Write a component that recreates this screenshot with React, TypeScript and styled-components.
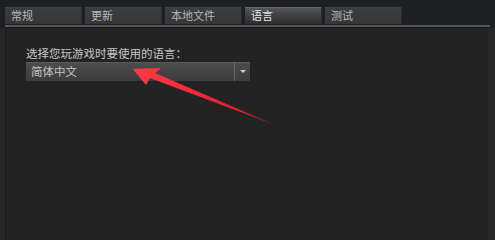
import styled, { createGlobalStyle } from 'styled-components';

const GlobalStyle = createGlobalStyle`
  html, body {
    margin: 0;
    padding: 0;
    background: #232323;
  }
  body {
    font-family: "Noto Sans CJK SC", "Noto Sans", sans-serif;
  }
`;

const Window = styled.div`
  position: relative;
  width: 495px;
  min-height: 201px;
  height: 100vh;
  overflow: hidden;
  background: #1d1f22;
  display: flex;
  flex-direction: column;
`;

const TabBar = styled.div`
  display: flex;
  gap: 3px;
  padding: 7px 0 0 5px;
  height: 17px;
`;

const Tab = styled.div<{ $active?: boolean }>`
  width: 77px;
  height: 17px;
  box-sizing: border-box;
  padding-left: 6px;
  font-size: 11px;
  line-height: 17px;
  color: ${(p) => (p.$active ? '#e6e6e6' : '#b8b8b8')};
  background: ${(p) =>
    p.$active
      ? 'linear-gradient(#585858, #3c3c3c 60%, #2e2e2e)'
      : 'linear-gradient(#3d3d3d, #363636)'};
  border-right: 1px solid #2a2a2a;
  box-shadow: inset 0 1px 0 ${(p) => (p.$active ? '#666' : '#444')};
`;

const Divider = styled.div`
  margin: 1px 5px 0 5px;
  height: 2px;
  background: #555;
  border-bottom: 1px solid #1a1a1a;
`;

const Panel = styled.div`
  flex: 1;
  display: flex;
  background: #262626;
`;

const Content = styled.div`
  flex: 1;
  margin: 0 5px 0 5px;
  padding: 18px 0 0 20px;
  background: #232323;
  border-left: 1px solid #1c1c1c;
  border-right: 1px solid #2c2c2c;
`;

const Label = styled.div`
  font-size: 11.5px;
  line-height: 14px;
  color: #c6c6c6;
  margin-bottom: 2px;
`;

const Select = styled.div`
  width: 224px;
  height: 19px;
  display: flex;
  align-items: stretch;
  background: linear-gradient(#4d4d4d, #3c3c3c);
  box-shadow: inset 0 1px 0 #5a5a5a;
`;

const SelectValue = styled.div`
  flex: 1;
  padding-left: 5px;
  font-size: 11.5px;
  line-height: 19px;
  color: #c4c4c4;
`;

const SelectButton = styled.div`
  width: 15px;
  border-left: 1px solid #666;
  display: flex;
  align-items: center;
  justify-content: center;
`;

const Pointer = styled.svg`
  position: absolute;
  left: 0;
  top: 0;
  pointer-events: none;
`;

const tabs = ['常规', '更新', '本地文件', '语言', '测试'];

const App = () => (
  <Window>
    <GlobalStyle />
    <TabBar>
      {tabs.map((t) => (
        <Tab key={t} $active={t === '语言'}>
          {t}
        </Tab>
      ))}
    </TabBar>
    <Divider />
    <Panel>
      <Content>
        <Label>选择您玩游戏时要使用的语言：</Label>
        <Select>
          <SelectValue>简体中文</SelectValue>
          <SelectButton>
            <svg width="6" height="3" viewBox="0 0 6 3">
              <path d="M0 0 H6 L3 3 Z" fill="#cfcfcf" />
            </svg>
          </SelectButton>
        </Select>
      </Content>
    </Panel>
    <Pointer width="495" height="201" viewBox="0 0 495 201">
      <defs>
        <linearGradient id="arrowFill" x1="133" y1="70" x2="275" y2="125" gradientUnits="userSpaceOnUse">
          <stop offset="0" stopColor="#ff3a44" />
          <stop offset="0.7" stopColor="#e8222c" />
          <stop offset="1" stopColor="#8a2a20" />
        </linearGradient>
      </defs>
      <path d="M133 69 L161 68 L155 73 L275 125 L150 78 L146 85 Z" fill="url(#arrowFill)" />
    </Pointer>
  </Window>
);

export default App;
